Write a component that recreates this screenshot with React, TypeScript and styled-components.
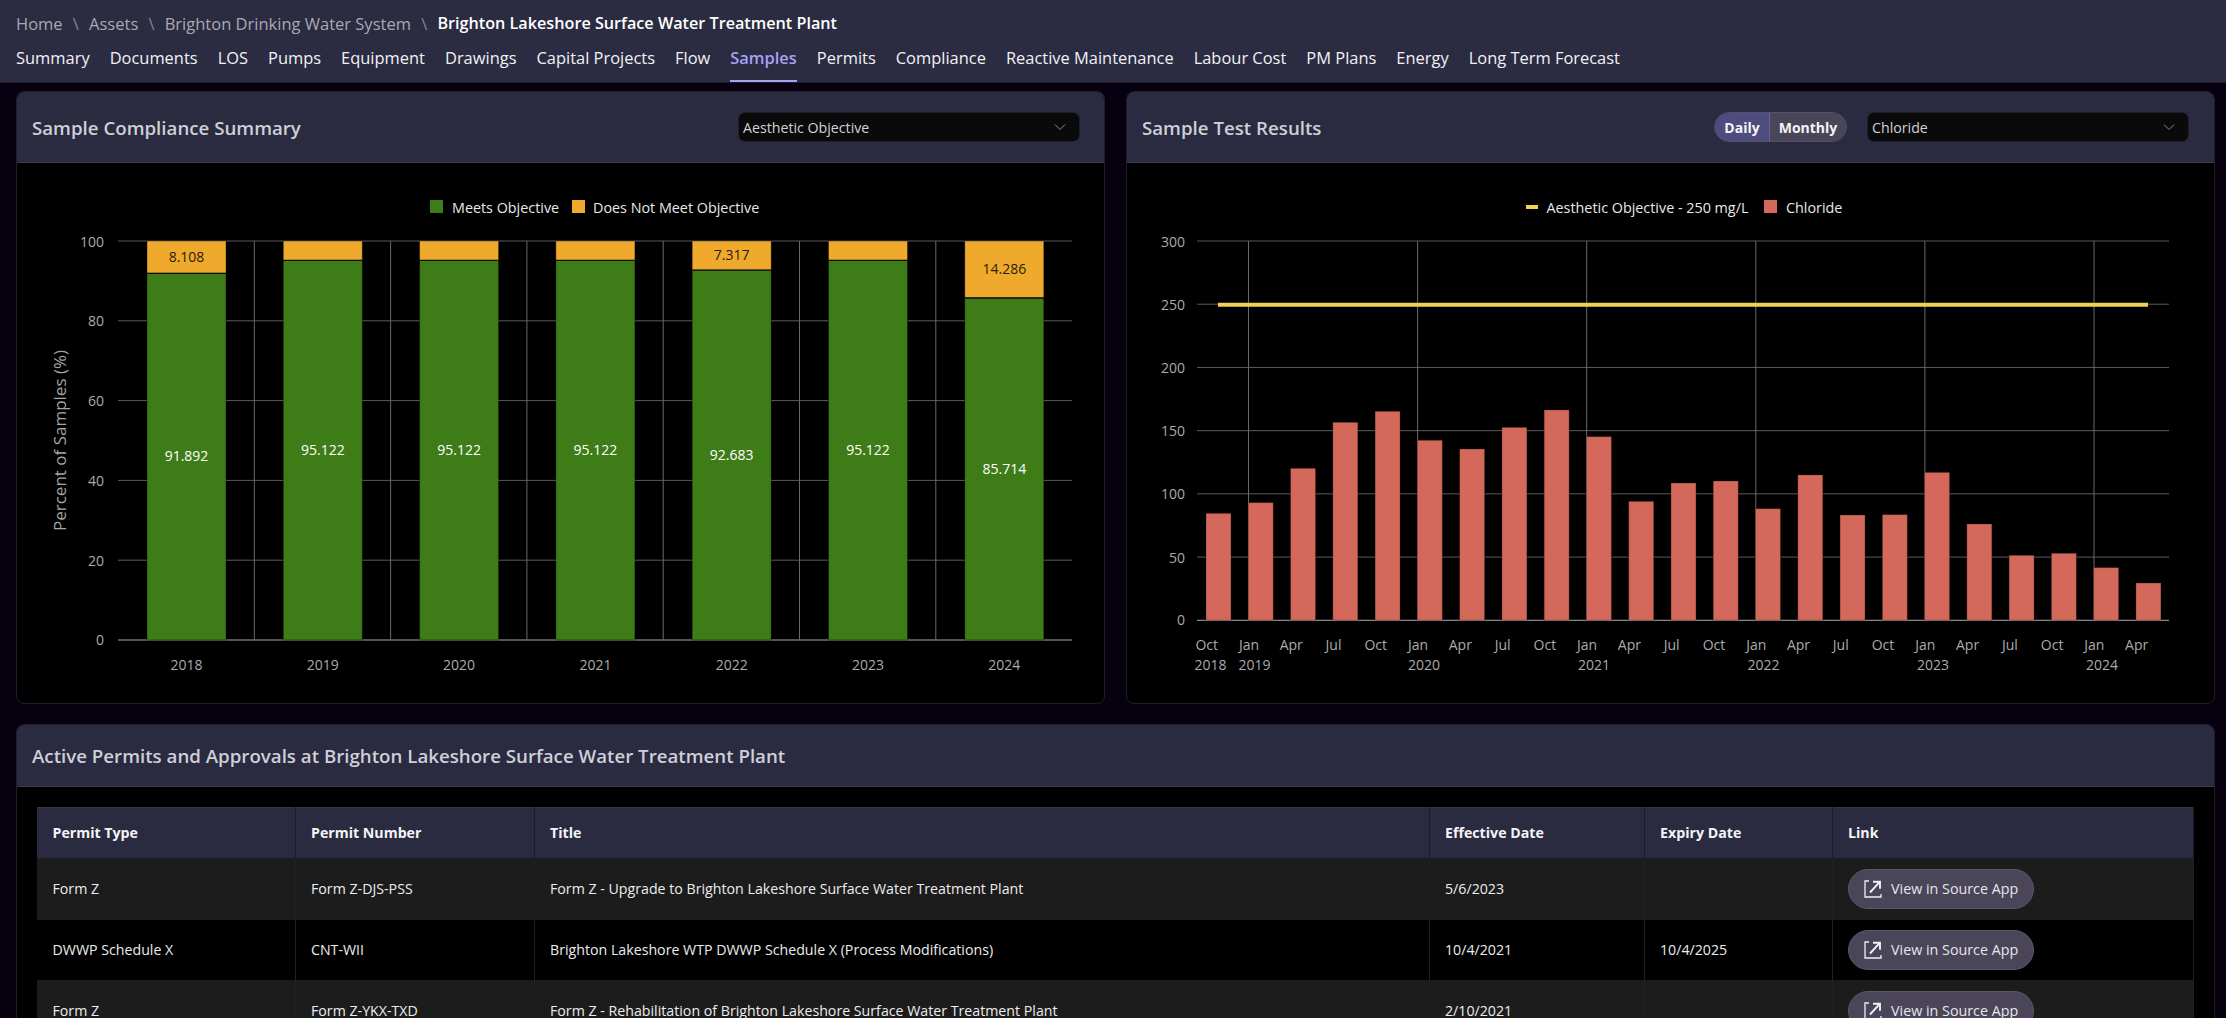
import React from "react";
import styled, { createGlobalStyle } from "styled-components";

const Global = createGlobalStyle`
  html, body { margin: 0; padding: 0; background: #06000f; height: 100%; overflow: hidden; }
  body { font-family: "Open Sans", "Noto Sans", sans-serif; color: #fff; }
  #root { height: 1018px; overflow: hidden; }
`;

const Header = styled.header`
  height: 83px;
  box-sizing: border-box;
  background: #2b2b42;
  padding: 11px 16px 0;
  border-bottom: 1px solid #1b1b2a;
`;
const Crumbs = styled.nav`
  display: flex;
  align-items: center;
  height: 24px;
  font-size: 16.5px;
  white-space: nowrap;
`;
const Crumb = styled.span`
  color: #a9a9b3;
`;
const CrumbSep = styled.span`
  color: #85858f;
  margin: 0 10.2px;
`;
const CrumbCurrent = styled.span`
  color: #fff;
  font-size: 16.2px;
  font-weight: 600;
`;
const Tabs = styled.nav`
  display: flex;
  gap: 20px;
  margin-top: 11px;
  white-space: nowrap;
`;
const Tab = styled.a<{ $active?: boolean }>`
  box-sizing: border-box;
  height: 36px;
  line-height: 24px;
  font-size: 16.45px;
  font-weight: ${(p) => (p.$active ? 600 : 400)};
  color: ${(p) => (p.$active ? "#a6a1f2" : "#f2f2f5")};
  border-bottom: 2px solid ${(p) => (p.$active ? "#a6a1f2" : "transparent")};
`;
const Main = styled.main`
  padding: 8px 11px 0 16px;
  display: flex;
  flex-direction: column;
  gap: 20px;
`;
const ChartRow = styled.div`
  display: grid;
  grid-template-columns: 1089px 1089px;
  gap: 21px;
`;
const Panel = styled.section`
  box-sizing: border-box;
  border: 1px solid #1e1e2c;
  border-radius: 8px;
  overflow: hidden;
  background: #000;
`;
const PanelHead = styled.div<{ $h: number }>`
  height: ${(p) => p.$h}px;
  box-sizing: border-box;
  display: flex;
  align-items: center;
  padding: 0 15px;
  background: #2a2a40;
  border-bottom: 1px solid #3a3a52;
`;
const PanelTitle = styled.h2`
  flex: 1;
  margin: 0;
  font-size: 18.7px;
  font-weight: 600;
  color: #cfcfd8;
  white-space: nowrap;
`;
const Toggle = styled.div`
  display: flex;
  height: 30px;
  margin-right: 20px;
  border-radius: 15px;
  overflow: hidden;
  border: 1px solid #55526a;
  box-sizing: border-box;
`;
const ToggleBtn = styled.button<{ $on?: boolean }>`
  border: 0;
  padding: 0;
  width: ${(p) => (p.$on ? "55px" : "76px")};
  font: 700 14px "Open Sans", sans-serif;
  color: #f4f4f8;
  background: ${(p) => (p.$on ? "#4e4b7e" : "#4a4559")};
  border-right: ${(p) => (p.$on ? "1px solid #6a6790" : "0")};
`;
const Select = styled.div<{ $w: number; $mr: number }>`
  width: ${(p) => p.$w}px;
  height: 30px;
  box-sizing: border-box;
  margin-right: ${(p) => p.$mr}px;
  display: flex;
  align-items: center;
  justify-content: space-between;
  padding: 0 12px 0 4px;
  background: #0a0a0a;
  border: 1px solid #1f1f30;
  border-radius: 7px;
  font-size: 14.2px;
  color: #d2d2d6;
`;
const Chart = styled.svg`
  display: block;
`;
const Tick = styled.text<{ $a?: string }>`
  fill: #ababab;
  font-size: 14px;
  text-anchor: ${(p) => p.$a || "middle"};
  dominant-baseline: central;
`;
const AxisTitle = styled.text`
  fill: #a5a5a5;
  font-size: 17px;
  text-anchor: middle;
  dominant-baseline: central;
`;
const Legend = styled.text`
  fill: #e8e8e8;
  font-size: 14.35px;
  dominant-baseline: central;
`;
const BarLabel = styled.text<{ $dark?: boolean }>`
  fill: ${(p) => (p.$dark ? "#2a2008" : "#ffffff")};
  font-size: 14px;
  text-anchor: middle;
  dominant-baseline: central;
`;
const TableBody = styled.div`
  padding: 20px 21px 0 20px;
`;
const Table = styled.table`
  width: 2156px;
  table-layout: fixed;
  border-collapse: collapse;
  font-size: 14.2px;
`;
const Th = styled.th`
  height: 50px;
  padding: 0 15.5px;
  text-align: left;
  font-weight: 700;
  color: #f4f4f6;
  background: #2a2a40;
  border-right: 1px solid #1a1a28;
  border-top: 1px solid #34344a;
  box-sizing: border-box;
`;
const Tr = styled.tr<{ $h: number; $alt?: boolean }>`
  height: ${(p) => p.$h}px;
  background: ${(p) => (p.$alt ? "#1c1c1c" : "#000")};
`;
const Td = styled.td`
  padding: 0 15.5px;
  color: #ececee;
  border-right: 1px solid #1f1f26;
  white-space: nowrap;
`;
const SourceBtn = styled.a`
  display: inline-flex;
  align-items: center;
  gap: 9px;
  box-sizing: border-box;
  height: 40px;
  width: 186px;
  padding-left: 15px;
  background: #4a4559;
  border: 1px solid #5a566a;
  border-radius: 20px;
  color: #e6e6ea;
  font-size: 14.3px;
  vertical-align: middle;
`;

const tabs = ["Summary","Documents","LOS","Pumps","Equipment","Drawings","Capital Projects","Flow","Samples","Permits","Compliance","Reactive Maintenance","Labour Cost","PM Plans","Energy","Long Term Forecast"];

const Chevron = () => (
  <svg width="14" height="14" viewBox="0 0 14 14" fill="none" stroke="#8a8a90" strokeWidth="1">
    <path d="M2 4.5 L7 9.5 L12 4.5" />
  </svg>
);
const OpenIcon = () => (
  <svg width="18" height="18" viewBox="0 0 18 18" fill="none" stroke="#f0f0f2">
    <path d="M5 1H1v16h16v-3" strokeWidth="1.3" />
    <path d="M6 12.5 15.5 2.2M9 1.8h7v7" strokeWidth="1.9" />
  </svg>
);

const compliance = [
  { y: "2018", v: 91.892, o: "8.108" },
  { y: "2019", v: 95.122 },
  { y: "2020", v: 95.122 },
  { y: "2021", v: 95.122 },
  { y: "2022", v: 92.683, o: "7.317" },
  { y: "2023", v: 95.122 },
  { y: "2024", v: 85.714, o: "14.286" },
];
const GRID = "#5a5a5e";
const VGRID = "#6a6a6e";
const yL = (v: number) => 640 - 3.99 * v;

const ComplianceChart = () => (
  <Chart width={1087} height={540} viewBox="17 163 1087 540">
    <rect x="430" y="200" width="13" height="13" fill="#3e7c17" />
    <Legend x="452" y="207">Meets Objective</Legend>
    <rect x="572" y="200" width="13" height="13" fill="#efaa2e" />
    <Legend x="593" y="207">Does Not Meet Objective</Legend>
    {[0, 20, 40, 60, 80, 100].map((t) => (
      <g key={t}>
        <line x1="118" x2="1072" y1={yL(t)} y2={yL(t)} stroke={t === 0 ? "#a8a8a8" : GRID} strokeWidth="1" />
        <Tick $a="end" x="104" y={yL(t) - (t === 0 ? 1 : 0)}>{t}</Tick>
      </g>
    ))}
    {[1, 2, 3, 4, 5, 6].map((i) => (
      <line key={i} x1={118 + 136.3 * i} x2={118 + 136.3 * i} y1="241" y2="640" stroke={VGRID} strokeWidth="1" />
    ))}
    <AxisTitle transform="translate(59.5 440.5) rotate(-90)">Percent of Samples (%)</AxisTitle>
    {compliance.map((d, i) => {
      const x = 147 + 136.3 * i;
      const top = yL(d.v);
      return (
        <g key={d.y}>
          <rect x={x} y={241} width="79" height={top - 241} fill="#efaa2e" stroke="#000" strokeOpacity=".35" />
          <rect x={x} y={top} width="79" height={640 - top} fill="#3e7c17" stroke="#000" strokeOpacity=".35" />
          <line x1={x} x2={x + 79} y1={top} y2={top} stroke="#111" strokeWidth="1.3" />
          <BarLabel x={x + 39.5} y={(top + 640) / 2 - 1}>{d.v.toFixed(3)}</BarLabel>
          {d.o && <BarLabel $dark x={x + 39.5} y={(top + 241) / 2 - 1}>{d.o}</BarLabel>}
          <Tick x={x + 39.5} y="664">{d.y}</Tick>
        </g>
      );
    })}
  </Chart>
);

const chloride = [84.6,93.1,120.2,156.6,165.3,142.4,135.5,152.6,166.4,145.3,94.1,108.6,110.2,88.3,115,83.3,83.6,117,76.2,51.4,53,41.7,29.5];
const months = ["Oct","Jan","Apr","Jul"];
const years: Record<number, [string, number]> = { 0: ["2018", 1194.6], 1: ["2019", 1238.6], 5: ["2020", 1408], 9: ["2021", 1578], 13: ["2022", 1747.5], 17: ["2023", 1917], 21: ["2024", 2086] };
const yR = (v: number) => 620.3 - 1.2643 * v;

const ResultsChart = () => (
  <Chart width={1087} height={540} viewBox="1127 163 1087 540">
    <rect x="1526" y="205" width="12" height="4" fill="#f4cf50" />
    <Legend x="1546.5" y="207">Aesthetic Objective - 250 mg/L</Legend>
    <rect x="1764" y="200" width="13" height="13" fill="#d4685a" />
    <Legend x="1786" y="207">Chloride</Legend>
    {[0, 50, 100, 150, 200, 250, 300].map((t) => (
      <g key={t}>
        <line x1="1197" x2="2169" y1={yR(t)} y2={yR(t)} stroke={t === 0 ? "#a8a8a8" : GRID} strokeWidth="1" />
        <Tick $a="end" x="1185" y={yR(t) - (t === 0 ? 1 : 0)}>{t}</Tick>
      </g>
    ))}
    {[0, 1, 2, 3, 4, 5].map((i) => (
      <line key={i} x1={1248.5 + 169.1 * i} x2={1248.5 + 169.1 * i} y1="241" y2="620" stroke={VGRID} strokeWidth="1" />
    ))}
    {chloride.map((v, i) => (
      <rect key={i} x={1206 + 42.27 * i} y={yR(v)} width="25" height={620.3 - yR(v)} fill="#d4685a" stroke="#000" strokeOpacity=".25" />
    ))}
    <line x1="1218" x2="2148" y1="304.7" y2="304.7" stroke="#f2cf55" strokeWidth="4" />
    {chloride.map((_, i) => (
      <g key={i}>
        <Tick x={1206.7 + 42.27 * i} y="644">{months[i % 4]}</Tick>
        {years[i] && <Tick $a="start" x={years[i][1]} y="664">{years[i][0]}</Tick>}
      </g>
    ))}
  </Chart>
);

const rows = [
  { h: 62, alt: true, c: ["Form Z", "Form Z-DJS-PSS", "Form Z - Upgrade to Brighton Lakeshore Surface Water Treatment Plant", "5/6/2023", ""] },
  { h: 60, alt: false, c: ["DWWP Schedule X", "CNT-WII", "Brighton Lakeshore WTP DWWP Schedule X (Process Modifications)", "10/4/2021", "10/4/2025"] },
  { h: 62, alt: true, c: ["Form Z", "Form Z-YKX-TXD", "Form Z - Rehabilitation of Brighton Lakeshore Surface Water Treatment Plant", "2/10/2021", ""] },
];
const widths = [258, 239, 895, 215, 188, 361];

export default function App() {
  return (
    <>
      <Global />
      <Header>
        <Crumbs>
          <Crumb>Home</Crumb><CrumbSep>\</CrumbSep>
          <Crumb>Assets</Crumb><CrumbSep>\</CrumbSep>
          <Crumb>Brighton Drinking Water System</Crumb><CrumbSep>\</CrumbSep>
          <CrumbCurrent>Brighton Lakeshore Surface Water Treatment Plant</CrumbCurrent>
        </Crumbs>
        <Tabs>
          {tabs.map((t) => <Tab key={t} $active={t === "Samples"}>{t}</Tab>)}
        </Tabs>
      </Header>
      <Main>
        <ChartRow>
          <Panel>
            <PanelHead $h={71}>
              <PanelTitle>Sample Compliance Summary</PanelTitle>
              <Select $w={342} $mr={9}>Aesthetic Objective<Chevron /></Select>
            </PanelHead>
            <ComplianceChart />
          </Panel>
          <Panel>
            <PanelHead $h={71}>
              <PanelTitle>Sample Test Results</PanelTitle>
              <Toggle>
                <ToggleBtn $on>Daily</ToggleBtn>
                <ToggleBtn>Monthly</ToggleBtn>
              </Toggle>
              <Select $w={322} $mr={10}>Chloride<Chevron /></Select>
            </PanelHead>
            <ResultsChart />
          </Panel>
        </ChartRow>
        <Panel>
          <PanelHead $h={62}>
            <PanelTitle>Active Permits and Approvals at Brighton Lakeshore Surface Water Treatment Plant</PanelTitle>
          </PanelHead>
          <TableBody>
            <Table>
              <colgroup>{widths.map((w, i) => <col key={i} width={w} />)}</colgroup>
              <thead>
                <tr>
                  {["Permit Type","Permit Number","Title","Effective Date","Expiry Date","Link"].map((h) => <Th key={h}>{h}</Th>)}
                </tr>
              </thead>
              <tbody>
                {rows.map((r, i) => (
                  <Tr key={i} $h={r.h} $alt={r.alt}>
                    {r.c.map((c, j) => <Td key={j}>{c}</Td>)}
                    <Td><SourceBtn><OpenIcon />View in Source App</SourceBtn></Td>
                  </Tr>
                ))}
              </tbody>
            </Table>
          </TableBody>
        </Panel>
      </Main>
    </>
  );
}
